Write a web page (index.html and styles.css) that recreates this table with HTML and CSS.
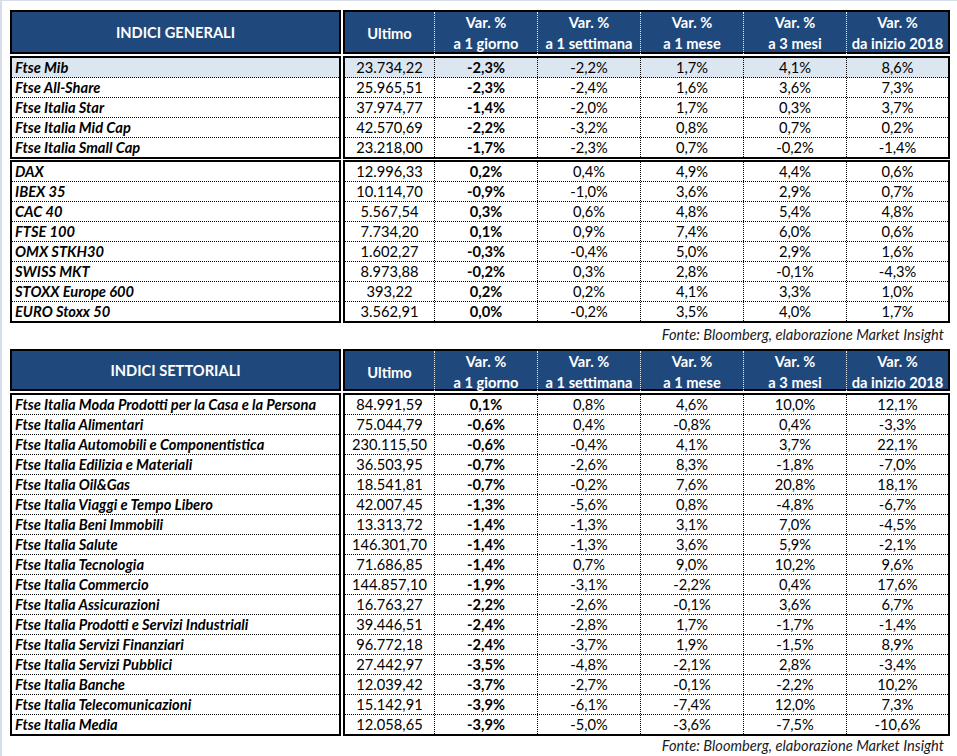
FILE: index.html
```html
<!DOCTYPE html>
<html lang="it">
<head>
<meta charset="utf-8">
<title>Indici</title>
<link rel="stylesheet" href="styles.css">
</head>
<body>
<main class="sheet">

<section class="tbl">
  <div class="pair head h44">
    <div class="box namebox hdr"><div class="htitle">INDICI GENERALI</div></div>
    <div class="box databox hdr">
      <div class="hrow">
        <span>Ultimo</span>
        <span>Var. %<br>a 1 giorno</span>
        <span>Var. %<br>a 1 settimana</span>
        <span>Var. %<br>a 1 mese</span>
        <span>Var. %<br>a 3 mesi</span>
        <span>Var. %<br>da inizio 2018</span>
      </div>
    </div>
  </div>
  <div class="pair grp">
    <div class="box namebox">
      <div class="nrow hl">Ftse Mib</div>
      <div class="nrow">Ftse All-Share</div>
      <div class="nrow">Ftse Italia Star</div>
      <div class="nrow">Ftse Italia Mid Cap</div>
      <div class="nrow">Ftse Italia Small Cap</div>
    </div>
    <div class="box databox">
      <div class="drow hl"><span>23.734,22</span><span>-2,3%</span><span>-2,2%</span><span>1,7%</span><span>4,1%</span><span>8,6%</span></div>
      <div class="drow"><span>25.965,51</span><span>-2,3%</span><span>-2,4%</span><span>1,6%</span><span>3,6%</span><span>7,3%</span></div>
      <div class="drow"><span>37.974,77</span><span>-1,4%</span><span>-2,0%</span><span>1,7%</span><span>0,3%</span><span>3,7%</span></div>
      <div class="drow"><span>42.570,69</span><span>-2,2%</span><span>-3,2%</span><span>0,8%</span><span>0,7%</span><span>0,2%</span></div>
      <div class="drow"><span>23.218,00</span><span>-1,7%</span><span>-2,3%</span><span>0,7%</span><span>-0,2%</span><span>-1,4%</span></div>
    </div>
  </div>
  <div class="pair grp g1">
    <div class="box namebox">
      <div class="nrow">DAX</div>
      <div class="nrow">IBEX 35</div>
      <div class="nrow">CAC 40</div>
      <div class="nrow">FTSE 100</div>
      <div class="nrow">OMX STKH30</div>
      <div class="nrow">SWISS MKT</div>
      <div class="nrow">STOXX Europe 600</div>
      <div class="nrow">EURO Stoxx 50</div>
    </div>
    <div class="box databox">
      <div class="drow"><span>12.996,33</span><span>0,2%</span><span>0,4%</span><span>4,9%</span><span>4,4%</span><span>0,6%</span></div>
      <div class="drow"><span>10.114,70</span><span>-0,9%</span><span>-1,0%</span><span>3,6%</span><span>2,9%</span><span>0,7%</span></div>
      <div class="drow"><span>5.567,54</span><span>0,3%</span><span>0,6%</span><span>4,8%</span><span>5,4%</span><span>4,8%</span></div>
      <div class="drow"><span>7.734,20</span><span>0,1%</span><span>0,9%</span><span>7,4%</span><span>6,0%</span><span>0,6%</span></div>
      <div class="drow"><span>1.602,27</span><span>-0,3%</span><span>-0,4%</span><span>5,0%</span><span>2,9%</span><span>1,6%</span></div>
      <div class="drow"><span>8.973,88</span><span>-0,2%</span><span>0,3%</span><span>2,8%</span><span>-0,1%</span><span>-4,3%</span></div>
      <div class="drow"><span>393,22</span><span>0,2%</span><span>0,2%</span><span>4,1%</span><span>3,3%</span><span>1,0%</span></div>
      <div class="drow"><span>3.562,91</span><span>0,0%</span><span>-0,2%</span><span>3,5%</span><span>4,0%</span><span>1,7%</span></div>
    </div>
  </div>
  <p class="fonte f1">Fonte: Bloomberg, elaborazione Market Insight</p>
</section>

<section class="tbl">
  <div class="pair head h42">
    <div class="box namebox hdr"><div class="htitle">INDICI SETTORIALI</div></div>
    <div class="box databox hdr">
      <div class="hrow">
        <span>Ultimo</span>
        <span>Var. %<br>a 1 giorno</span>
        <span>Var. %<br>a 1 settimana</span>
        <span>Var. %<br>a 1 mese</span>
        <span>Var. %<br>a 3 mesi</span>
        <span>Var. %<br>da inizio 2018</span>
      </div>
    </div>
  </div>
  <div class="pair grp">
    <div class="box namebox">
      <div class="nrow">Ftse Italia Moda Prodotti per la Casa e la Persona</div>
      <div class="nrow">Ftse Italia Alimentari</div>
      <div class="nrow">Ftse Italia Automobili e Componentistica</div>
      <div class="nrow">Ftse Italia Edilizia e Materiali</div>
      <div class="nrow">Ftse Italia Oil&amp;Gas</div>
      <div class="nrow">Ftse Italia Viaggi e Tempo Libero</div>
      <div class="nrow">Ftse Italia Beni Immobili</div>
      <div class="nrow">Ftse Italia Salute</div>
      <div class="nrow">Ftse Italia Tecnologia</div>
      <div class="nrow">Ftse Italia Commercio</div>
      <div class="nrow">Ftse Italia Assicurazioni</div>
      <div class="nrow">Ftse Italia Prodotti e Servizi Industriali</div>
      <div class="nrow">Ftse Italia Servizi Finanziari</div>
      <div class="nrow">Ftse Italia Servizi Pubblici</div>
      <div class="nrow">Ftse Italia Banche</div>
      <div class="nrow">Ftse Italia Telecomunicazioni</div>
      <div class="nrow">Ftse Italia Media</div>
    </div>
    <div class="box databox">
      <div class="drow"><span>84.991,59</span><span>0,1%</span><span>0,8%</span><span>4,6%</span><span>10,0%</span><span>12,1%</span></div>
      <div class="drow"><span>75.044,79</span><span>-0,6%</span><span>0,4%</span><span>-0,8%</span><span>0,4%</span><span>-3,3%</span></div>
      <div class="drow"><span>230.115,50</span><span>-0,6%</span><span>-0,4%</span><span>4,1%</span><span>3,7%</span><span>22,1%</span></div>
      <div class="drow"><span>36.503,95</span><span>-0,7%</span><span>-2,6%</span><span>8,3%</span><span>-1,8%</span><span>-7,0%</span></div>
      <div class="drow"><span>18.541,81</span><span>-0,7%</span><span>-0,2%</span><span>7,6%</span><span>20,8%</span><span>18,1%</span></div>
      <div class="drow"><span>42.007,45</span><span>-1,3%</span><span>-5,6%</span><span>0,8%</span><span>-4,8%</span><span>-6,7%</span></div>
      <div class="drow"><span>13.313,72</span><span>-1,4%</span><span>-1,3%</span><span>3,1%</span><span>7,0%</span><span>-4,5%</span></div>
      <div class="drow"><span>146.301,70</span><span>-1,4%</span><span>-1,3%</span><span>3,6%</span><span>5,9%</span><span>-2,1%</span></div>
      <div class="drow"><span>71.686,85</span><span>-1,4%</span><span>0,7%</span><span>9,0%</span><span>10,2%</span><span>9,6%</span></div>
      <div class="drow"><span>144.857,10</span><span>-1,9%</span><span>-3,1%</span><span>-2,2%</span><span>0,4%</span><span>17,6%</span></div>
      <div class="drow"><span>16.763,27</span><span>-2,2%</span><span>-2,6%</span><span>-0,1%</span><span>3,6%</span><span>6,7%</span></div>
      <div class="drow"><span>39.446,51</span><span>-2,4%</span><span>-2,8%</span><span>1,7%</span><span>-1,7%</span><span>-1,4%</span></div>
      <div class="drow"><span>96.772,18</span><span>-2,4%</span><span>-3,7%</span><span>1,9%</span><span>-1,5%</span><span>8,9%</span></div>
      <div class="drow"><span>27.442,97</span><span>-3,5%</span><span>-4,8%</span><span>-2,1%</span><span>2,8%</span><span>-3,4%</span></div>
      <div class="drow"><span>12.039,42</span><span>-3,7%</span><span>-2,7%</span><span>-0,1%</span><span>-2,2%</span><span>10,2%</span></div>
      <div class="drow"><span>15.142,91</span><span>-3,9%</span><span>-6,1%</span><span>-7,4%</span><span>12,0%</span><span>7,3%</span></div>
      <div class="drow"><span>12.058,65</span><span>-3,9%</span><span>-5,0%</span><span>-3,6%</span><span>-7,5%</span><span>-10,6%</span></div>
    </div>
  </div>
  <p class="fonte f2">Fonte: Bloomberg, elaborazione Market Insight</p>
</section>

</main>
</body>
</html>
```
FILE: styles.css
```css
* { box-sizing: border-box; }

html, body {
  margin: 0;
  padding: 0;
  background: #ffffff;
}

body {
  width: 957px;
  height: 756px;
  overflow: hidden;
  border-top: 1px solid #d6deea;
  border-left: 2px solid #d6deea;
  font-family: Lato, "Open Sans", "Liberation Sans", sans-serif;
  font-size: 14.67px;
  color: #000;
}

.sheet {
  padding: 9px 0 0 8px;
  display: flex;
  flex-direction: column;
}

.tbl {
  display: flex;
  flex-direction: column;
  width: 940px;
}

.pair {
  display: grid;
  grid-template-columns: 331px 607px;
  column-gap: 2px;
}

.grp { margin-top: 2px; }
.g1 { margin-top: 1px; }

.box {
  border: 2px solid #000;
}

.hdr {
  background: #1f497d;
  color: #fff;
  font-weight: bold;
}

.h44 .box { height: 44px; }
.h42 .box { height: 42px; }

.htitle {
  height: 100%;
  display: flex;
  align-items: center;
  justify-content: center;
}

.hrow {
  height: 100%;
  display: grid;
  grid-template-columns: 90px 103px 103px 103px 103px 101px;
}

.hrow span {
  display: flex;
  align-items: center;
  justify-content: center;
  text-align: center;
  line-height: 21px;
  border-right: 1px dotted #e8eef6;
}

.hrow span:last-child { border-right: none; }

.nrow {
  height: 20px;
  line-height: 19px;
  padding-left: 3px;
  font-weight: bold;
  font-style: italic;
  border-bottom: 1px dotted #000;
  white-space: nowrap;
}

.drow {
  height: 20px;
  display: grid;
  grid-template-columns: 90px 103px 103px 103px 103px 101px;
  border-bottom: 1px dotted #000;
}

.nrow:last-child,
.drow:last-child {
  height: 19px;
  border-bottom: none;
}

.drow span {
  text-align: center;
  line-height: 19px;
  border-right: 1px dotted #000;
}

.drow span:last-child { border-right: none; }
.drow span:nth-child(2) { font-weight: bold; }

.hl { background: #dce6f1; }

.fonte {
  margin: 0;
  width: 940px;
  text-align: right;
  padding-right: 6px;
  font-style: italic;
  color: #1a1a1a;
}

.f1 { height: 26px; line-height: 24px; }
.f2 { height: 20px; line-height: 20px; }
```
